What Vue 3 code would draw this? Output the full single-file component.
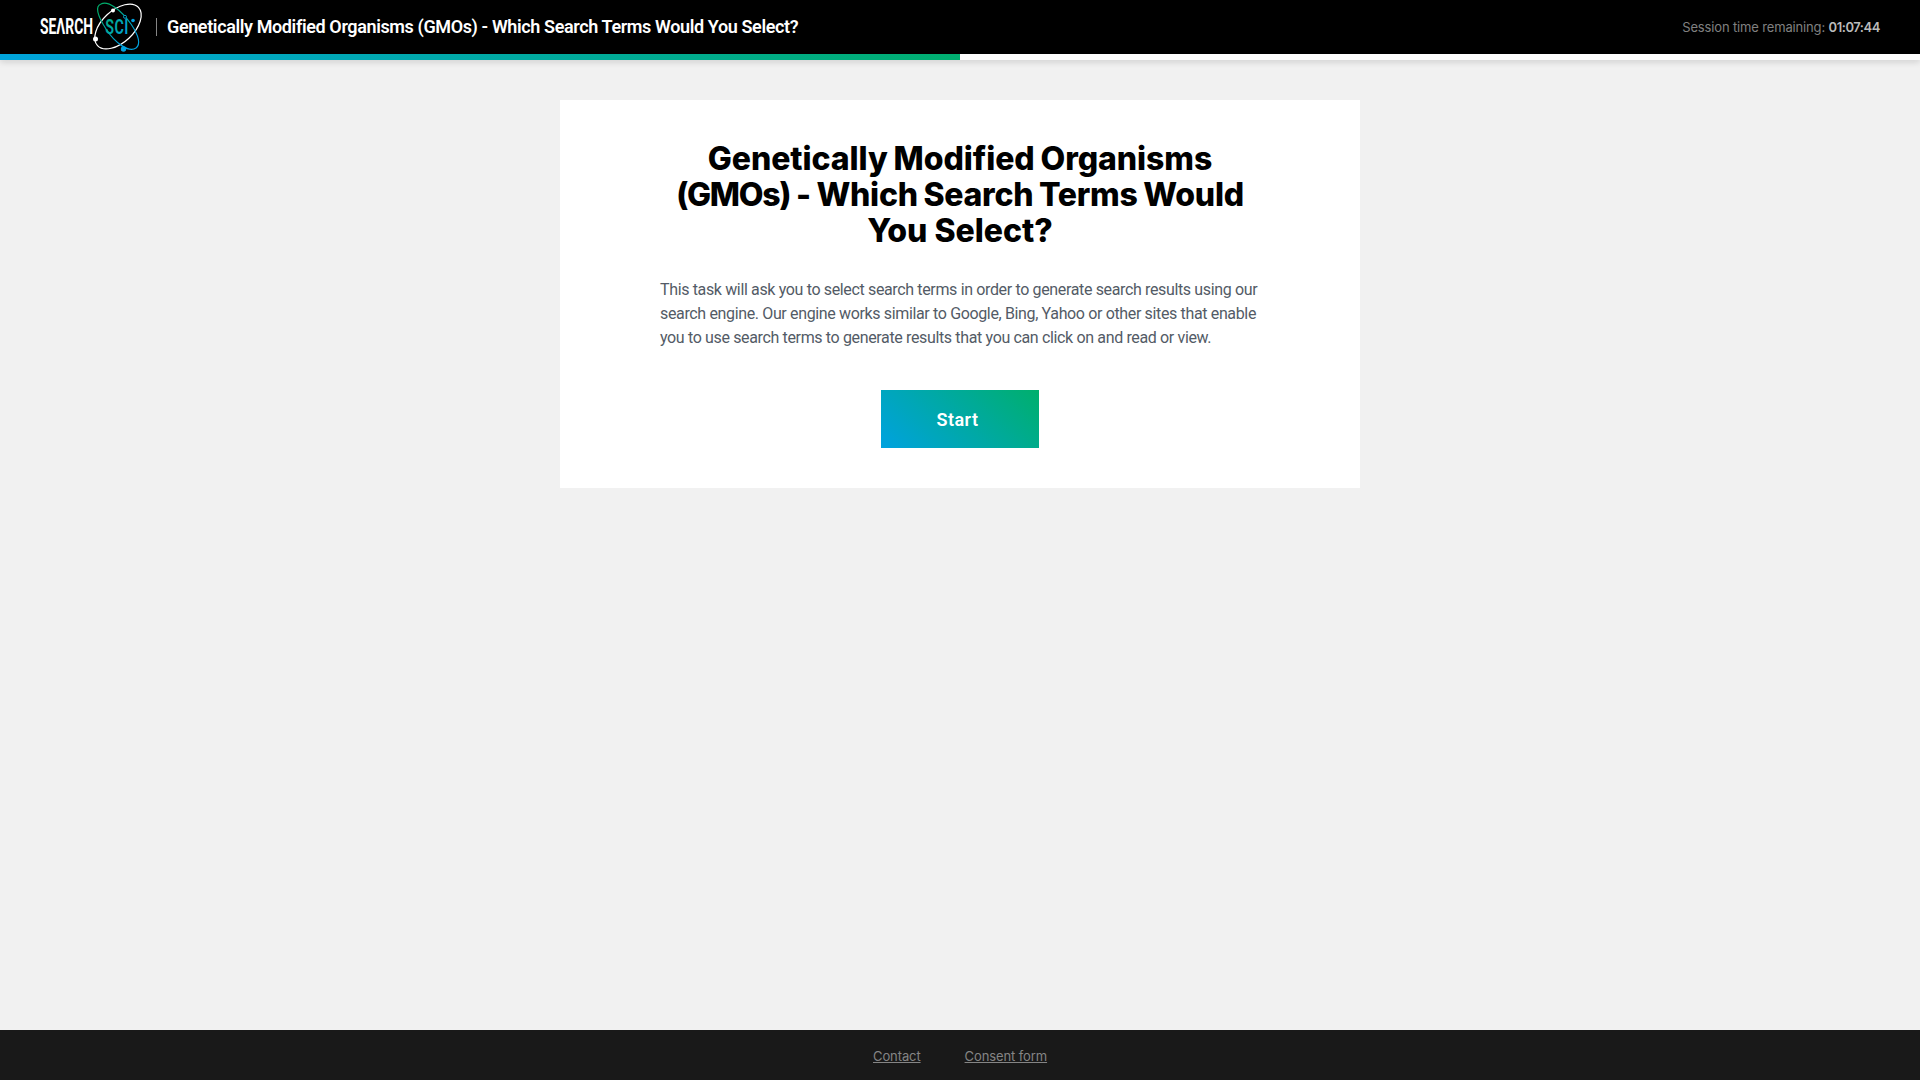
<script setup>
const title = 'Genetically Modified Organisms (GMOs) - Which Search Terms Would You Select?'
</script>

<template>
  <div class="page">
    <header class="bar">
      <svg class="logo" width="104" height="54" viewBox="0 0 104 54">
        <defs>
          <linearGradient id="orbit" gradientUnits="userSpaceOnUse" x1="60" y1="4" x2="92" y2="50">
            <stop offset="0.1" stop-color="#00ad6b" />
            <stop offset="0.8" stop-color="#00a2e0" />
          </linearGradient>
          <linearGradient id="sci" x1="0" y1="0" x2="1" y2="0.6">
            <stop offset="0" stop-color="#00ad7b" />
            <stop offset="1" stop-color="#00a2d8" />
          </linearGradient>
        </defs>
        <text transform="translate(0 34.300) scale(0.63 1)" class="word" fill="#fff">SEΛRCH</text>
        <g transform="rotate(-43 78 26.5)">
          <ellipse cx="78" cy="26.5" rx="28" ry="16" fill="none" stroke="#fff" stroke-width="1.2" />
        </g>
        <path d="M96 48C89 53 75 43 66 29C57 15 55 6 61 4C68 0 81 10 91 24C99 36 101 44 96 48Z" fill="none" stroke="url(#orbit)" stroke-width="1.2" />
        <circle cx="73" cy="10.500" r="2" fill="#fff" />
        <circle cx="55.500" cy="39" r="2.500" fill="#fff" />
        <circle cx="93" cy="20.500" r="1.800" fill="#00a2e0" />
        <circle cx="83.500" cy="49" r="2.700" fill="#00a2e0" />
        <text transform="translate(65.200 34.300) scale(0.65 0.96)" class="word sci" fill="url(#sci)">SCI</text>
        <circle cx="85" cy="16.800" r="1.500" fill="#000" stroke="#00a2c8" />
      </svg>
      <div class="title">{{ title }}</div>
      <div class="session">Session time remaining: <b>01:07:44</b></div>
    </header>
    <div class="progress"><div class="fill"></div></div>
    <main>
      <section class="card">
        <h1>
          <span class="h-first">Genetically Modified Organisms</span>
          <span class="h-second"><em>(GMOs)</em> - Which Search Terms Would</span>
          <span>You Select?</span>
        </h1>
        <p>
          <span>This task will ask you to select search terms in order to generate search results using our</span>
          <span>search engine. Our engine works similar to Google, Bing, Yahoo or other sites that enable</span>
          <span>you to use search terms to generate results that you can click on and read or view.</span>
        </p>
        <button>Start</button>
      </section>
    </main>
    <footer><a class="contact">Contact</a><a class="consent">Consent form</a></footer>
  </div>
</template>

<style>
body { margin: 0; }
</style>
<style scoped>
.page { min-height: 100vh; display: flex; flex-direction: column; background: #f1f1f1; font-family: Inter, "Liberation Sans", sans-serif; }
.bar { height: 54px; box-sizing: border-box; padding: 0 40px; background: #000; display: flex; align-items: center; }
.logo { flex: none; }
.word { font-family: Roboto, sans-serif; font-size: 22px; font-weight: 700; }
.sci { font-weight: 600; letter-spacing: 0.8px; }
.title { margin-left: 12px; padding-left: 10px; height: 18px; line-height: 17px; border-left: 1px solid #858585; color: #fff; font-family: Roboto, sans-serif; font-size: 18px; font-weight: 600; letter-spacing: -0.38px; white-space: nowrap; }
.session { margin-left: auto; color: #808080; font-size: 13px; letter-spacing: -0.15px; white-space: nowrap; }
.session b { color: #bbb; font-weight: 600; letter-spacing: -0.45px; }
.progress { height: 6px; background: #fff; box-shadow: 0 2px 6px rgba(0, 0, 0, 0.15); }
.fill { width: 50%; height: 6px; background: linear-gradient(90deg, #00a4dc, #00af70); }
main { flex: 1; display: flex; justify-content: center; align-items: flex-start; padding-top: 40px; }
.card { width: 800px; height: 388px; box-sizing: border-box; padding: 41px 100px 40px; background: #fff; display: flex; flex-direction: column; align-items: center; }
h1 { margin: 0; width: 600px; text-align: center; font-size: 32px; line-height: 36px; font-weight: 800; color: #000; }
h1 span, p span { display: block; white-space: nowrap; }
h1 em { font-style: normal; letter-spacing: -1.3px; }
.h-first { letter-spacing: -0.07px; word-spacing: -1px; }
.h-second { letter-spacing: -0.27px; word-spacing: -1px; }
p { margin: 29px 0 40px; width: 600px; font-family: Roboto, sans-serif; font-size: 16px; line-height: 24px; color: #535b66; letter-spacing: -0.355px; }
button { flex: none; width: 158px; height: 58px; padding: 0 5px 0 0; border: 0; background: linear-gradient(45deg, #00a2df, #00af6c); color: #fff; font-family: Roboto, sans-serif; font-size: 18px; font-weight: 600; letter-spacing: 0.5px; }
footer { height: 50px; background: #191919; display: flex; align-items: center; color: #858585; font-size: 13px; padding-left: 873px; padding-top: 2px; box-sizing: border-box; letter-spacing: -0.1px; }
footer a { text-decoration: underline; }
.contact { margin-right: 44px; }
</style>
